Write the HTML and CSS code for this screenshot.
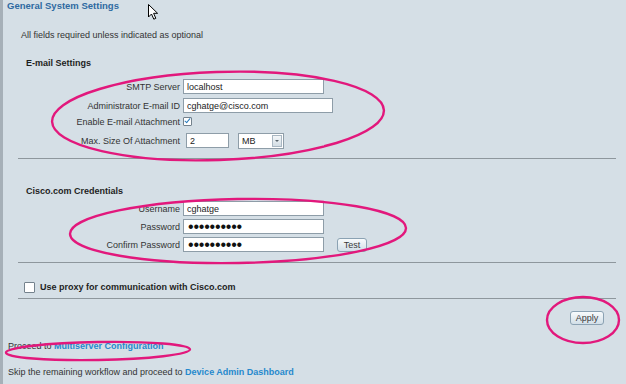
FILE: index.html
```html
<!DOCTYPE html>
<html lang="en">
<head>
    <meta charset="UTF-8">
    <title>General System Settings</title>
    <link rel="stylesheet" href="styles.css">
</head>
<body>
    <div class="page">
        <h1 class="page-title">General System Settings</h1>
        <p class="intro">All fields required unless indicated as optional</p>

        <div class="panel">
            <div class="group group-email">
                <h2 class="group-title">E-mail Settings</h2>
                <div class="form-grid email-grid">
                    <label class="field-label" for="smtp">SMTP Server</label>
                    <input class="text-input" id="smtp" type="text" value="localhost">

                    <label class="field-label" for="admin-mail">Administrator E-mail ID</label>
                    <input class="text-input text-input-wide" id="admin-mail" type="text" value="cghatge@cisco.com">

                    <label class="field-label label-top" for="attach">Enable E-mail Attachment</label>
                    <div class="field field-top">
                        <input class="check check-small" id="attach" type="checkbox" checked>
                    </div>

                    <label class="field-label" for="max-size">Max. Size Of Attachment</label>
                    <div class="field">
                        <input class="text-input text-input-short" id="max-size" type="text" value="2">
                        <span class="select-wrap">
                            <select class="select">
                                <option>MB</option>
                                <option>KB</option>
                            </select>
                        </span>
                    </div>
                </div>
            </div>

            <div class="group group-cred">
                <h2 class="group-title">Cisco.com Credentials</h2>
                <div class="form-grid cred-grid">
                    <label class="field-label" for="username">Username</label>
                    <input class="text-input" id="username" type="text" value="cghatge">

                    <label class="field-label" for="password">Password</label>
                    <input class="text-input password" id="password" type="password" value="cghatge123">

                    <label class="field-label" for="confirm">Confirm Password</label>
                    <div class="field">
                        <input class="text-input password" id="confirm" type="password" value="cghatge123">
                        <button class="btn btn-test" type="button">Test</button>
                    </div>
                </div>
            </div>

            <div class="group group-proxy">
                <label class="proxy-row">
                    <input class="check" type="checkbox">
                    <span>Use proxy for communication with Cisco.com</span>
                </label>
            </div>

            <div class="actions">
                <button class="btn btn-apply" type="button">Apply</button>
            </div>
        </div>

        <p class="next-step">Proceed to <a class="link" href="#">Multiserver Configuration</a></p>
        <p class="next-step skip">Skip the remaining workflow and proceed to <a class="link" href="#">Device Admin Dashboard</a></p>
    </div>

    <!-- pen marks drawn over the screenshot -->
    <svg class="annotations" width="626" height="384" viewBox="0 0 626 384">
        <ellipse cx="218" cy="116" rx="166" ry="44" transform="rotate(-2 218 116)"/>
        <ellipse cx="238" cy="231" rx="168" ry="32" transform="rotate(-1 238 231)"/>
        <ellipse cx="583" cy="320" rx="36" ry="23"/>
        <ellipse cx="98" cy="351" rx="92" ry="9" transform="rotate(-1 98 351)"/>
    </svg>

    <svg class="cursor" width="12" height="17" viewBox="0 0 12 17">
        <path d="M0.5 0.5 L0.5 13 L3.5 10 L5.8 15.2 L7.8 14.3 L5.6 9.3 L9.6 9.3 Z"/>
    </svg>
</body>
</html>
```

FILE: styles.css
```css
body {
    margin: 0;
    background: #d5dfe6;
    font-family: "Liberation Sans", Arial, sans-serif;
    font-size: 9px;
    color: #333;
}

.page {
    min-height: 384px;
    box-sizing: border-box;
    border-left: 3px solid #a6b0b8;
    overflow: hidden;
}

.page-title {
    margin: 0;
    padding-left: 4px;
    font-size: 9.5px;
    line-height: 12px;
    font-weight: bold;
    color: #2f6aa1;
}

.intro {
    margin: 17px 0 0 18px;
    line-height: 12px;
}

.panel {
    margin: 16px 10px 0 15px;
}

.group {
    border-bottom: 1px solid #8e979d;
}

.group-email {
    padding-bottom: 10px;
}

.group-cred {
    padding: 26px 0 10px;
}

.group-proxy {
    padding: 18px 0 5px 6px;
}

.group-title {
    margin: 0 0 10px 8px;
    font-size: 9px;
    line-height: 12px;
    font-weight: bold;
    color: #1e1e1e;
}

.group-cred .group-title {
    margin-bottom: 4px;
}

.form-grid {
    display: grid;
    grid-template-columns: 162px auto;
    column-gap: 3px;
    align-items: center;
}

.email-grid {
    grid-template-rows: 15px 15px 12px 15px;
    row-gap: 4px;
}

.cred-grid {
    grid-auto-rows: 15px;
    row-gap: 3px;
}

.field-label {
    text-align: right;
    line-height: 12px;
    white-space: nowrap;
}

.label-top {
    align-self: start;
    line-height: 10px;
}

.field {
    display: flex;
    align-items: center;
}

.field-top {
    align-self: start;
}

.form-grid > input {
    justify-self: start;
}

.text-input {
    box-sizing: border-box;
    width: 141px;
    height: 15px;
    margin: 0;
    padding: 0 3px;
    border: 1px solid #8e9da8;
    border-radius: 0;
    background: #fff;
    font-family: "Liberation Sans", Arial, sans-serif;
    font-size: 9px;
    line-height: 13px;
    color: #222;
    outline: none;
}

.text-input-wide {
    width: 150px;
}

.text-input-short {
    width: 43px;
    margin-left: 3px;
}

.password {
    padding-left: 4px;
    font-size: 16px;
    letter-spacing: -0.2px;
    color: #111;
}

.select-wrap {
    position: relative;
    margin-left: 9px;
    display: block;
    height: 16px;
}

.select {
    appearance: none;
    box-sizing: border-box;
    width: 46px;
    height: 16px;
    margin: 0;
    padding: 0 3px;
    border: 1px solid #8e9da8;
    border-radius: 0;
    background: #fff;
    font-family: "Liberation Sans", Arial, sans-serif;
    font-size: 9px;
    color: #222;
}

.select-wrap::after {
    content: "";
    position: absolute;
    right: 2px;
    top: 2px;
    width: 10px;
    height: 12px;
    box-sizing: border-box;
    border: 1px solid #a9b7c2;
    background: linear-gradient(#f4f7f9, #d3dde4);
    pointer-events: none;
}

.select-wrap::before {
    content: "";
    position: absolute;
    right: 5px;
    top: 7px;
    z-index: 1;
    border-left: 2px solid transparent;
    border-right: 2px solid transparent;
    border-top: 2px solid #59646c;
    pointer-events: none;
}

.check {
    appearance: none;
    position: relative;
    box-sizing: border-box;
    width: 11px;
    height: 11px;
    margin: 0;
    border: 1px solid #74828d;
    border-radius: 1px;
    background: #fff;
}

.check-small {
    width: 9px;
    height: 9px;
}

.check:checked::after {
    content: "";
    position: absolute;
    left: 2px;
    top: -1px;
    width: 2px;
    height: 5px;
    border: solid #2a7cbc;
    border-width: 0 1.5px 1.5px 0;
    transform: rotate(40deg);
}

.btn {
    box-sizing: border-box;
    height: 14px;
    padding: 0;
    border: 1px solid #8ba2b3;
    border-radius: 3px;
    background: linear-gradient(#f8fbfc, #d2dfe8);
    font-family: "Liberation Sans", Arial, sans-serif;
    font-size: 9px;
    line-height: 12px;
    color: #3b3b3b;
}

.btn-test {
    width: 30px;
    margin-left: 13px;
}

.btn-apply {
    width: 34px;
}

.proxy-row {
    display: flex;
    align-items: center;
    gap: 5px;
    height: 12px;
    font-weight: bold;
    color: #1e1e1e;
}

.actions {
    display: flex;
    justify-content: flex-end;
    padding: 12px 12px 0 0;
}

.next-step {
    margin: 15px 0 0 5px;
    line-height: 12px;
}

.skip {
    margin-top: 14px;
}

.link {
    color: #2689cd;
    font-weight: bold;
    text-decoration: none;
}

.annotations {
    position: absolute;
    top: 0;
    left: 0;
    pointer-events: none;
}

.annotations ellipse {
    fill: none;
    stroke: #e2187c;
    stroke-width: 2.4;
}

.cursor {
    position: absolute;
    top: 4px;
    left: 148px;
    pointer-events: none;
}

.cursor path {
    fill: #fff;
    stroke: #000;
    stroke-width: 1;
    stroke-linejoin: round;
}
```
